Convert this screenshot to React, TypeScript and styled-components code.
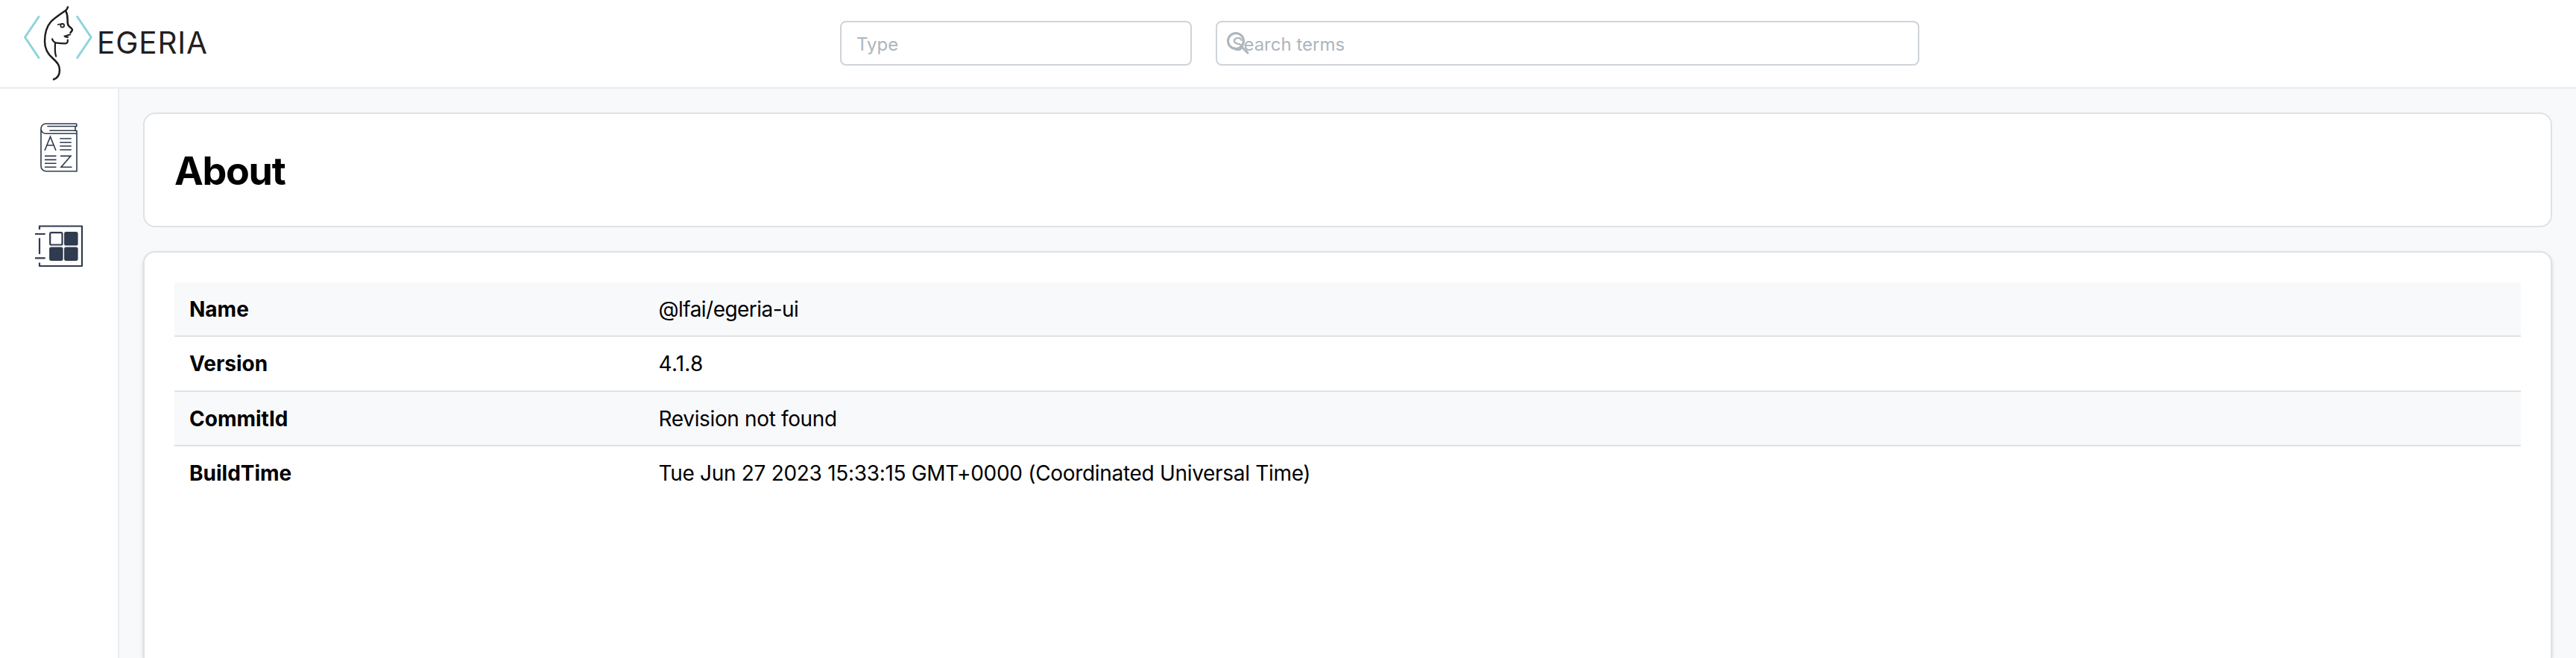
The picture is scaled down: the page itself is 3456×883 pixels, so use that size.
import React from 'react';
import styled, { createGlobalStyle } from 'styled-components';

const GlobalStyle = createGlobalStyle`
  *, *::before, *::after { box-sizing: border-box; }
  html, body { margin: 0; height: 100%; overflow: hidden; }
  body {
    font-family: Inter, 'Liberation Sans', sans-serif;
    font-size: 28px;
    line-height: 1.55;
    color: #000;
    background: #f8f9fb;
  }
`;

const Shell = styled.div`
  display: flex;
  flex-direction: column;
  height: 883px;
`;

const Header = styled.header`
  display: flex;
  flex: none;
  align-items: flex-start;
  height: 119px;
  background: #fff;
  border-bottom: 2px solid #e9ecef;
`;

const Brand = styled.a`
  flex: none;
  width: 1127px;
  height: 117px;
`;

const LogoSvg = styled.svg`
  display: block;
`;

const Wordmark = styled.text`
  font-family: Inter, 'Liberation Sans', sans-serif;
  font-size: 40.5px;
  fill: #231f20;
`;

const SearchBar = styled.form`
  display: flex;
  gap: 32px;
  padding-top: 28px;
`;

const Field = styled.label<{ $width: number }>`
  position: relative;
  display: block;
  width: ${(p) => p.$width}px;
  height: 60px;
`;

const TextInput = styled.input`
  display: block;
  width: 100%;
  height: 60px;
  padding: 2px 20px 0;
  border: 2px solid #ced4da;
  border-radius: 8px;
  background: #fff;
  font: 400 24px/54px Inter, 'Liberation Sans', sans-serif;
  letter-spacing: 0;
  outline: none;
  &::placeholder { color: #adb5bd; opacity: 1; }
`;

const FieldIcon = styled.svg`
  position: absolute;
  left: 14px;
  top: 14px;
  pointer-events: none;
`;

const Body = styled.div`
  display: flex;
  flex: 1;
  min-height: 0;
`;

const Sidebar = styled.nav`
  display: flex;
  flex: none;
  flex-direction: column;
  width: 160px;
  background: #fff;
  border-right: 2px solid #e9ecef;
`;

const NavLink = styled.a`
  display: block;
  height: 132px;
  svg { display: block; }
`;

const Main = styled.main`
  display: flex;
  flex: 1;
  flex-direction: column;
  gap: 32px;
  padding: 32px 32px 0;
  min-width: 0;
`;

const Card = styled.section`
  flex: none;
  height: 154px;
  padding: 40px;
  border: 2px solid #dee2e6;
  border-radius: 16px;
  background: #fff;
`;

const DetailsCard = styled(Card)`
  flex: 1;
  height: auto;
  min-height: 0;
  border-bottom: 0;
  border-radius: 16px 16px 0 0;
  box-shadow: 0 2px 6px rgba(0, 0, 0, 0.05), 0 2px 4px rgba(0, 0, 0, 0.1);
`;

const Title = styled.h2`
  margin: 0;
  padding-top: 2px;
  font-size: 52px;
  line-height: 70px;
  font-weight: 700;
  letter-spacing: -1.3px;
`;

const Table = styled.table`
  width: 100%;
  table-layout: fixed;
  border-collapse: separate;
  border-spacing: 0;
`;

const Row = styled.tr`
  &:nth-child(odd) { background: #f8f9fb; }
  &:not(:last-child) > * { border-bottom: 2px solid #dee2e6; }
`;

const Label = styled.th`
  width: 20%;
  padding: 15px 20px 13px;
  text-align: left;
  font-weight: 700;
  line-height: 43.4px;
`;

const Value = styled.td<{ $tracking: number }>`
  padding: 15px 20px 13px;
  line-height: 43.4px;
  letter-spacing: ${(p) => p.$tracking}px;
`;

const details = [
  { label: 'Name', value: '@lfai/egeria-ui', tracking: -0.55 },
  { label: 'Version', value: '4.1.8', tracking: 0.2 },
  { label: 'CommitId', value: 'Revision not found', tracking: -0.36 },
  {
    label: 'BuildTime',
    value: 'Tue Jun 27 2023 15:33:15 GMT+0000 (Coordinated Universal Time)',
    tracking: -0.31,
  },
];

function Logo() {
  return (
    <LogoSvg width="320" height="117" viewBox="0 0 320 117" fill="none" strokeLinecap="round" strokeLinejoin="round">
      <g stroke="#8fd3dc" strokeWidth="3">
        <path d="M52 22.500 33.500 50l18.500 27.500" />
        <path d="M103.700 22.500 122.200 50l-18.500 27.500" />
      </g>
      <g stroke="#1d1d1f" strokeWidth="2.500">
        <path d="M91 9.500c-.500 2-1.500 3.500-3.500 5-8 5.500-15 10-19.500 15-6 7-8 15-8 26 0 10 4 17 11 23 6 5.500 9 9 9 15.500 0 6.500-2 10.500-8 12.500" />
        <path d="M88.200 14.500c2 4 2.500 8 2.500 12.500-.200 4-.400 5.500 1.300 7.500 2 2.500 5 3.500 5 5.500 0 1.500-1.500 2.300-2.500 4" />
        <path d="M94 46.500c-3 0-4 2-7.500 2 1.500 1.500 3 1.500 4.500 1.500M90.800 53.500c.3 3.500-.5 4.800-3.300 4.800-5 0-8.500-.3-13-1-2-.8-3.800-2.500-4.500-5" strokeWidth="2.200" />
        <path d="M74 58c0 5-1 12 1.200 17.500" strokeWidth="2.200" />
        <path d="M77.500 33c2-.8 4-.8 6-.8" strokeWidth="1.500" />
        <circle cx="83.700" cy="34.200" r="2.400" strokeWidth="1.700" />
      </g>
      <Wordmark x="130" y="72.300" textLength="148">EGERIA</Wordmark>
    </LogoSvg>
  );
}

function GlossaryIcon() {
  return (
    <svg width="158" height="132" viewBox="0 119 158 132" fill="none" stroke="#2f3b4e" strokeWidth="1.600">
      <path d="M102.800 166H61a6.700 6.700 0 0 0-6 6.700V223a6.700 6.700 0 0 0 6.700 6.700h41.300V175.500h-3M102.800 166v3.500h-3M101 169.500v6M55 172.700c0 4 3 6.600 6.500 6.600h41.500M63.300 169.500H100M66.300 175.300H100" />
      <path d="M60 202 67.500 183.500 75 202M62.500 195h10M81 209.400h14L82 224.200h14.500" />
      <path d="M80.300 186h15.500M80.300 191.200h15.500M80.300 196h15.500M80.300 201h15.500M60 209.400h15.500M60 214.400h15.500M60 219.200h15.500M60 224.200h15.500" />
    </svg>
  );
}

function DashboardIcon() {
  return (
    <svg width="158" height="132" viewBox="0 251 158 132" fill="none" stroke="#2f3b4e" strokeWidth="2.200" strokeLinejoin="round">
      <path d="M53 308v-4.500h57V357H53v-4.500M53 319.500V341" />
      <path d="M47 314h13.700M47 346.400h13.700" />
      <rect x="67.200" y="312.200" width="16.300" height="16.300" rx="1.500" />
      <g fill="#2f3b4e">
        <rect x="87.200" y="312.200" width="16.300" height="16.300" rx="1.500" />
        <rect x="67.200" y="332.500" width="16.300" height="16.300" rx="1.500" />
        <rect x="87.200" y="332.500" width="16.300" height="16.300" rx="1.500" />
      </g>
    </svg>
  );
}

export default function App() {
  return (
    <Shell>
      <GlobalStyle />
      <Header>
        <Brand aria-label="Egeria"><Logo /></Brand>
        <SearchBar>
          <Field $width={472}>
            <TextInput placeholder="Type" />
          </Field>
          <Field $width={944}>
            <TextInput placeholder="Search terms" />
            <FieldIcon width="32" height="32" viewBox="0 0 32 32" fill="none" stroke="#adb5bd" strokeWidth="3" strokeLinecap="round">
              <circle cx="13" cy="13" r="10.500" />
              <path d="m20.500 20.500 8.500 8.500" />
            </FieldIcon>
          </Field>
        </SearchBar>
      </Header>
      <Body>
        <Sidebar>
          <NavLink aria-label="Glossary"><GlossaryIcon /></NavLink>
          <NavLink aria-label="Dashboard"><DashboardIcon /></NavLink>
        </Sidebar>
        <Main>
          <Card>
            <Title>About</Title>
          </Card>
          <DetailsCard>
            <Table>
              <tbody>
                {details.map(({ label, value, tracking }) => (
                  <Row key={label}>
                    <Label scope="row">{label}</Label>
                    <Value $tracking={tracking}>{value}</Value>
                  </Row>
                ))}
              </tbody>
            </Table>
          </DetailsCard>
        </Main>
      </Body>
    </Shell>
  );
}
